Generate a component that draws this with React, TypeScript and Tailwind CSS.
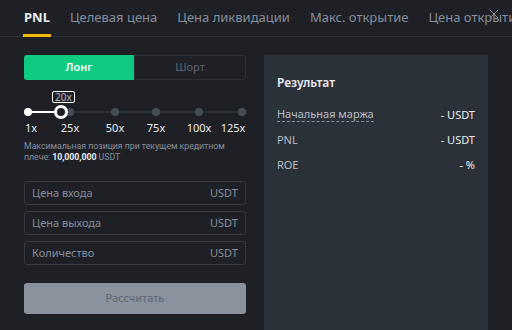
import { X } from "lucide-react";

const TABS = ["PNL", "Целевая цена", "Цена ликвидации", "Макс. открытие", "Цена открытия"];
const MARKS = ["1x", "25x", "50x", "75x", "100x", "125x"];
// dot centres relative to the slider box (x = 24)
const DOTS = [4, 46, 91, 132, 175, 218];

function Field({ label }: { label: string }) {
  return (
    <div className="flex h-[24px] items-center justify-between rounded-[3px] border border-[#343a43] px-[7px] text-[11px] text-[#848e9c]">
      <span>{label}</span>
      <span>USDT</span>
    </div>
  );
}

function Row({ label, value, dashed }: { label: string; value: string; dashed?: boolean }) {
  return (
    <div className="flex items-center justify-between text-[11px] leading-[14px]">
      <span
        className={
          dashed
            ? "border-b border-dashed border-[#848e9c] text-[#b7bdc6]"
            : "text-[#b7bdc6]"
        }
      >
        {label}
      </span>
      <span className="text-[#eaecef]">{value}</span>
    </div>
  );
}

export default function App() {
  return (
    <div
      className="relative h-[330px] w-[512px] overflow-hidden bg-[#1e2026]"
      style={{ fontFamily: '"Noto Sans", Inter, sans-serif' }}
    >
      {/* tabs */}
      <div className="flex h-[37px] gap-5 whitespace-nowrap border-b border-[#2b3139] px-6">
        {TABS.map((t, i) => (
          <div key={t} className="relative flex items-center">
            <span
              className={
                i === 0
                  ? "text-[13px] font-bold text-[#eaecef]"
                  : "text-[13px] text-[#848e9c]"
              }
            >
              {t}
            </span>
            {i === 0 && (
              <span className="absolute bottom-[-1px] left-[-1px] right-[-1px] h-[3px] bg-[#f0b90b]" />
            )}
          </div>
        ))}
      </div>
      <X
        className="absolute right-[10px] top-[6px] text-[#848e9c]"
        size={16}
        strokeWidth={1.5}
      />

      <div className="flex gap-[18px] px-6 pt-[18px]">
        {/* left column */}
        <div className="flex w-[223px] flex-col">
          <div className="flex h-[25px] text-[11px]">
            <div className="flex flex-1 items-center justify-center rounded-l-[3px] bg-[#0ecb81] font-semibold text-white">
              Лонг
            </div>
            <div className="flex flex-1 items-center justify-center rounded-r-[3px] border border-[#2b3139] text-[#5e6673]">
              Шорт
            </div>
          </div>

          <div className="relative mt-[11px] h-[50px]">
            <div className="absolute left-[28px] top-0 rounded-[2px] border border-white bg-[#1e2026] px-[2px] text-[10px] leading-[10px] text-[#b7bdc6]">
              20x
            </div>
            <div className="absolute left-[4px] right-[4px] top-[20px] h-[2px] bg-[#2b3139]" />
            <div className="absolute left-[4px] top-[20px] h-[2px] w-[32px] bg-white" />
            {DOTS.map((d, i) => (
              <span
                key={d}
                className={
                  i === 0
                    ? "absolute top-[17px] h-[8px] w-[8px] rounded-full bg-white"
                    : "absolute top-[17px] h-[8px] w-[8px] rounded-full bg-[#474d57]"
                }
                style={{ left: d - 4 }}
              />
            ))}
            <span className="absolute left-[30px] top-[14px] h-[14px] w-[14px] rounded-full border-[3px] border-white bg-[#1e2026]" />
            {MARKS.map((m, i) => (
              <span
                key={m}
                className="absolute top-[29px] flex w-0 justify-center text-[11px] text-[#eaecef]"
                style={{ left: i === 0 ? 7 : i === 5 ? 209 : DOTS[i] }}
              >
                {m}
              </span>
            ))}
          </div>

          <p
            className="whitespace-nowrap text-[8.8px] leading-[11px] tracking-[-0.05px] text-[#848e9c]"
            style={{ fontFamily: "Roboto, sans-serif" }}
          >
            Максимальная позиция при текущем кредитном
            <br />
            плече: <span className="font-bold text-[#eaecef]">10,000,000</span> USDT
          </p>

          <div className="mt-[18px] flex flex-col gap-[6px]">
            <Field label="Цена входа" />
            <Field label="Цена выхода" />
            <Field label="Количество" />
          </div>

          <button className="mt-[18px] h-[31px] rounded-[3px] bg-[#8a929e] text-[11px] text-[#5e6673]">
            Рассчитать
          </button>
        </div>

        {/* right column */}
        <div className="flex h-[275px] w-[225px] flex-col bg-[#2b3139] px-[13px] pt-[19px]">
          <h3 className="text-[12px] font-semibold text-[#eaecef]">Результат</h3>
          <div className="mt-[15px] flex flex-col gap-[11px]">
            <Row label="Начальная маржа" value="- USDT" dashed />
            <Row label="PNL" value="- USDT" />
            <Row label="ROE" value="- %" />
          </div>
        </div>
      </div>
    </div>
  );
}
